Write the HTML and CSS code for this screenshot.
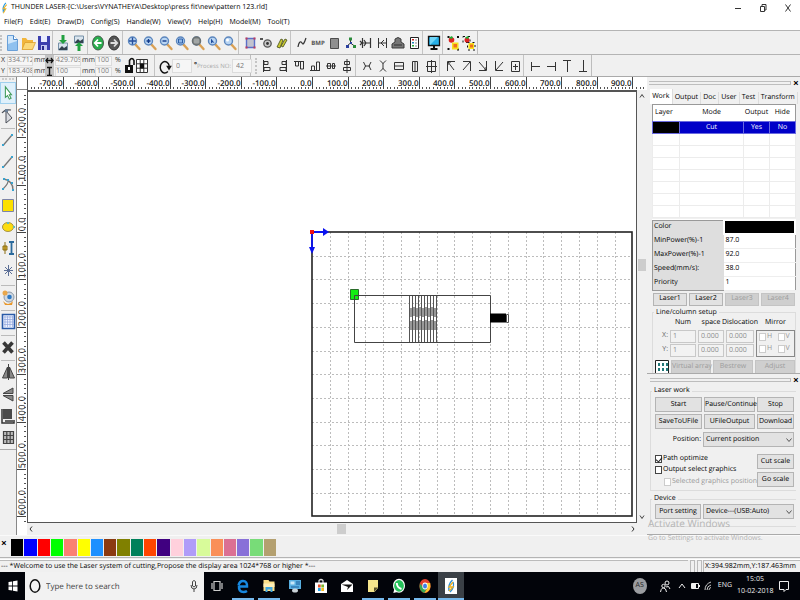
FILE: index.html
```html
<!DOCTYPE html>
<html lang="en">
<head>
<meta charset="utf-8">
<title>THUNDER LASER</title>
<link rel="stylesheet" href="styles.css">
</head>
<body>
<svg class="defs" aria-hidden="true">
  <symbol id="lens" viewBox="0 0 16 16"><path d="M9.5 9.5l4 4.5" stroke="#d9a054" stroke-width="2.4" stroke-linecap="round"/><circle cx="6.5" cy="6" r="4" fill="#b9d5f3" stroke="#5c86bd" stroke-width="1.4"/></symbol>
  <symbol id="chev" viewBox="0 0 8 8"><path d="M1.5 2.5L4 5.5l2.500-3" fill="none" stroke="#555"/></symbol>
</svg>

<header class="title">
  <svg class="logo" viewBox="0 0 10 14"><path d="M6 1Q2 5 3 11l2-3" fill="none" stroke="#2c9be0" stroke-width="1.400"/><path d="M7 3L3 8h3l-3 5" fill="none" stroke="#f0b428" stroke-width="1.200"/></svg>
  <h1>THUNDER LASER-[C:\Users\VYNATHEYA\Desktop\press fit\new\pattern 123.rld]</h1>
  <div class="winbtns">
    <button aria-label="Minimize"><svg viewBox="0 0 8 8"><path d="M1 4.500h6" stroke="#333"/></svg></button>
    <button aria-label="Restore"><svg viewBox="0 0 8 8"><path d="M1.500 2.500h4v5h-4zM3 2V.5h4V6H6" fill="none" stroke="#333"/></svg></button>
    <button aria-label="Close"><svg viewBox="0 0 8 8"><path d="M1.500 .5l5 7M6.500 .5l-5 7" stroke="#333"/></svg></button>
  </div>
</header>
<nav class="menu">
  <button>File(F)</button><button>Edit(E)</button><button>Draw(D)</button><button>Config(S)</button><button>Handle(W)</button><button>View(V)</button><button>Help(H)</button><button>Model(M)</button><button>Tool(T)</button>
</nav>

<div class="bar bar1"><div class="tools" role="toolbar" aria-label="Standard">
  <i class="grip"></i>
  <button aria-label="New"><svg viewBox="0 0 16 16"><path d="M3.500 .5h6l4 4v11h-10z" fill="#cfe6fa" stroke="#6aa0d8"/><path d="M9.500 .5v4h4" fill="#fff" stroke="#4a86c8"/><path d="M4 15V9l9-3v9z" fill="#8fc1ef"/></svg></button>
  <button aria-label="Open"><svg viewBox="0 0 16 16"><path d="M2 14.500V3h4l1.500 2H13v9.500z" fill="#f2b63c"/><path d="M2 14.500L5 7.500h10.500l-3 7z" fill="#fbd878" stroke="#d99a22" stroke-width=".7"/></svg></button>
  <button aria-label="Save"><svg viewBox="0 0 16 16"><path d="M2 1h12v14H2z" fill="#3b3fae"/><path d="M5 1h6v6H5z" fill="#e8ecff"/><path d="M5 10h6v5H5z" fill="#c3c8f2"/><path d="M6 11h2v4H6z" fill="#26298a"/></svg></button>
  <i class="sep"></i>
  <button aria-label="Import"><svg viewBox="0 0 16 16"><path d="M3.500 8h9v7h-9z" fill="#d9e4ee" stroke="#7791a8"/><path d="M4 14l3-3 2 2 3-2v4H4z" fill="#33424f"/><path d="M6.500 0h3v5H12L8 9 4 5h2.500z" fill="#22a040"/></svg></button>
  <button aria-label="Export"><svg viewBox="0 0 16 16"><path d="M3.500 1h9v7h-9z" fill="#d9e4ee" stroke="#7791a8"/><path d="M4 7l3-3 2 2 3-2v4H4z" fill="#33424f"/><path d="M6.500 16h3v-5H12L8 7l-4 4h2.500z" fill="#22a040"/></svg></button>
  <i class="sep"></i>
  <button aria-label="Undo"><svg viewBox="0 0 16 16"><ellipse cx="8" cy="8" rx="5.500" ry="7" fill="#27ad4c" stroke="#4c5b50"/><path d="M11.500 8H5M8 4.500L4.800 8 8 11.500" fill="none" stroke="#fff" stroke-width="1.800"/></svg></button>
  <button aria-label="Redo"><svg viewBox="0 0 16 16"><ellipse cx="8" cy="8" rx="5.500" ry="7" fill="#555" stroke="#333"/><path d="M4.500 8H11M8 4.500L11.200 8 8 11.500" fill="none" stroke="#ddd" stroke-width="1.800"/></svg></button>
  <i class="sep wide"></i>
  <button aria-label="Pan"><svg viewBox="0 0 16 16"><use href="#lens"/><path d="M3 6h7M6.500 2.500v7" stroke="#234c9c" stroke-width="1.400"/></svg></button>
  <button aria-label="Zoom in"><svg viewBox="0 0 16 16"><use href="#lens"/><path d="M4.500 6h4M6.500 4v4" stroke="#123a8a" stroke-width="1.400"/></svg></button>
  <button aria-label="Zoom out"><svg viewBox="0 0 16 16"><use href="#lens"/><path d="M4.500 6h4" stroke="#123a8a" stroke-width="1.400"/></svg></button>
  <button aria-label="Zoom page"><svg viewBox="0 0 16 16"><use href="#lens"/><path d="M4.500 4h4v4h-4z" fill="#8fb6e6" stroke="#2c5fa8"/></svg></button>
  <button aria-label="Zoom data"><svg viewBox="0 0 16 16"><use href="#lens"/><circle cx="6.500" cy="6" r="4" fill="#8b9090" stroke="#6b7070" stroke-width="1.400"/><path d="M4 5h5M4 7h5" stroke="#b8bcbc"/></svg></button>
  <button aria-label="Zoom selection"><svg viewBox="0 0 16 16"><use href="#lens"/><path d="M5 3.500v5l1.500-1.200L8.500 8z" fill="#1c4a9c"/></svg></button>
  <button aria-label="Zoom area"><svg viewBox="0 0 16 16"><use href="#lens"/><circle cx="5.500" cy="5" r="1.500" fill="#fff"/></svg></button>
  <i class="sep wide"></i>
  <button aria-label="Select frame"><svg viewBox="0 0 16 16"><path d="M4.500 3.500h8v9h-8z" fill="#c3c3cf" stroke="#5b6fc8" stroke-width="1.400"/><path d="M3.500 2.500h2v2h-2zM11.500 2.500h2v2h-2zM3.500 11.500h2v2h-2zM11.500 11.500h2v2h-2z" fill="#c23a5a"/></svg></button>
  <button aria-label="Position"><svg viewBox="0 0 16 16"><path d="M2 4h3" stroke="#222" stroke-width="1.500"/><circle cx="9.500" cy="8.500" r="3.700" fill="#c9c9c9" stroke="#555" stroke-width="1.300"/><circle cx="9.500" cy="8.500" r="1.400" fill="#333"/></svg></button>
  <button aria-label="Pencil"><svg viewBox="0 0 16 16"><path d="M3 12l4-8 2 1-3 8zM7 11l4-7 2 1-4 7z" fill="#c8c832" stroke="#454c1c" stroke-width=".8"/></svg></button>
  <i class="sep wide"></i>
  <button aria-label="Smooth curve"><svg viewBox="0 0 16 16"><path d="M4 12c1-6 3-6 4-4s2 1 4-5" fill="none" stroke="#333" stroke-width="1.200"/></svg></button>
  <button class="bmp" aria-label="Bitmap">BMP</button>
  <button aria-label="Fill"><svg viewBox="0 0 16 16"><path d="M4.500 3.500h8v10h-8z" fill="#8f8f8f" stroke="#4c4c4c"/></svg></button>
  <button aria-label="Group"><svg viewBox="0 0 16 16"><path d="M8.500 5v3L5 11M8.500 8l4 3" stroke="#333" fill="none"/><path d="M7 2.500h3v3H7z" fill="#2a8a3a"/><path d="M4 10h3v3H4zM8 7h2v2H8z" fill="#2a3f9e"/><path d="M11 10h3v3h-3z" fill="#2a8a3a"/></svg></button>
  <button aria-label="Offset in"><svg viewBox="0 0 16 16"><path d="M4.500 3v10M12.500 3v10M2 6l2 2-2 2M6 5l2 3-2 3M12 8H5" fill="none" stroke="#333" stroke-width="1.200"/></svg></button>
  <button aria-label="Offset out"><svg viewBox="0 0 16 16"><path d="M4.500 3v10M12.500 3v10M5 8h7M10 5L7 8l3 3" fill="none" stroke="#333"/></svg></button>
  <button aria-label="Output"><svg viewBox="0 0 16 16"><path d="M5 7V4q3-3 6 0v3l3 2v4H2V9z" fill="#777" stroke="#3c3c3c"/><path d="M4 10h8" stroke="#333"/></svg></button>
  <button aria-label="List"><svg viewBox="0 0 16 16"><path d="M4.500 2.500h8v11h-8z" fill="#fff" stroke="#222"/><path d="M6 4h2v1.500H6z" fill="#c22"/><path d="M6 7h2v1.500H6z" fill="#28b"/><path d="M6 10h2v1.500H6z" fill="#2a3"/><path d="M9 5h2M9 8h2M9 11h2" stroke="#888"/></svg></button>
  <i class="sep wide"></i>
  <button aria-label="Preview"><svg viewBox="0 0 16 16"><path d="M2.500 1.500h11v9h-11z" fill="#27b0e8" stroke="#111" stroke-width="1.300"/><path d="M4 10l8-8H4z" fill="#6fd4f6"/><path d="M7 11h2v2h2.500v2h-7v-2H7z" fill="#111"/></svg></button>
  <i class="sep"></i>
  <button aria-label="Group objects"><svg viewBox="0 0 16 16"><path d="M2.500 1h2v2h-2zM12 1h2v2h-2zM2.500 13h2v2h-2zM12 13.500h2v2h-2z" fill="#111"/><circle cx="6.500" cy="5" r="2.800" fill="#d22"/><path d="M4 2.500l3-1.500 1 2-2 1z" fill="#2a3"/><path d="M7 7.500h6.500v7H7z" fill="#f7e01c"/><path d="M8.500 9h3.500v3.500H8.500z" fill="#f0701c"/></svg></button>
  <button aria-label="Ungroup objects"><svg viewBox="0 0 16 16"><path d="M2 1.500h7v6H2zM6.500 7.500h7.500v7.500H6.500z" fill="none" stroke="#111" stroke-dasharray="2 3"/><circle cx="6" cy="5" r="2.500" fill="#d22"/><path d="M4 2.500l3-1.500 1 2-2 1z" fill="#2a3"/><path d="M7.500 8h5.500v6H7.500z" fill="#f7e01c"/><path d="M9 9.500h3v3H9z" fill="#f0701c"/></svg></button>
</div></div>

<div class="bar bar2">
  <form class="tools props">
    <div class="xy">
      <label for="px">X</label><input id="px" value="334.712"><span>mm</span>
      <label for="py">Y</label><input id="py" value="183.408"><span>mm</span>
    </div>
    <div class="wh">
      <svg viewBox="0 0 9 11"><path d="M1 5.500h7M3 3L1 5.500 3 8M6 3l2 2.500L6 8" fill="none" stroke="#111" stroke-width="1.300"/></svg><input aria-label="Width" value="429.705"><span>mm</span>
      <svg viewBox="0 0 9 11"><path d="M4.500 2v7M2 1.500h5M2 9.500h5" fill="none" stroke="#111" stroke-width="1.400"/></svg><input aria-label="Height" value="100"><span>mm</span>
    </div>
    <div class="pct">
      <input aria-label="Width percent" value="100"><span>%</span>
      <input aria-label="Height percent" value="100"><span>%</span>
    </div>
    <button type="button" class="lock" aria-label="Lock ratio"><svg viewBox="0 0 12 20"><path d="M5.500 9V4.500q2.500-4 4.500 0V9" fill="none" stroke="#111" stroke-width="1.600"/><path d="M1 9h8v8H1z" fill="#111"/><path d="M4 11h2v3H4z" fill="#fff"/></svg></button>
    <button type="button" class="lock" aria-label="Anchor"><svg viewBox="0 0 12 20"><path d="M.5 3.500h11v13H.5zM4.200 3v13M7.800 3v13M0 7.800h12M0 12.200h12" fill="#fff" stroke="#333"/><path d="M4 7.500h4v5H4z" fill="#111"/></svg></button>
    <i class="sep"></i>
    <button type="button" class="rot" aria-label="Rotate"><svg viewBox="0 0 12 14"><path d="M8.500 11A4 5 0 1 1 9.700 6" fill="none" stroke="#111" stroke-width="1.300"/><path d="M7 6h5l-2.500 4z" fill="#111"/></svg></button>
    <input class="one" aria-label="Angle" value="0"><b class="deg">°</b>
    <label for="pno" class="dim">Process NO:</label><input class="one no" id="pno" value="42">
  </form>
  <div class="tools line" role="toolbar" aria-label="Align">
    <i class="grip"></i>
    <button aria-label="Align left"><svg viewBox="0 0 16 16"><path d="M4.500 2v12M5 3.500h4v3H5zM5 9.500h6v3H5z"/></svg></button>
    <button aria-label="Align right"><svg viewBox="0 0 16 16"><path d="M11.500 2v12M7 3.500h4v3H7zM5 9.500h6v3H5z"/></svg></button>
    <button aria-label="Align top"><svg viewBox="0 0 16 16"><path d="M3 3.500h10M4.500 4v4h3V4M9.500 4v7h3V4"/></svg></button>
    <button aria-label="Align bottom"><svg viewBox="0 0 16 16"><path d="M3 12.500h10M4.500 12V8h3v4M9.500 12V4h3v8"/></svg></button>
    <button aria-label="Align middle"><svg viewBox="0 0 16 16"><path d="M3 8h10M4.500 5.500h3v5h-3zM9.500 5.500h2v5h-2z"/></svg></button>
    <button aria-label="Align center"><svg viewBox="0 0 16 16"><path d="M8 1v14M5.500 3.500h5v3h-5zM4.500 9.500h7v3h-7z"/></svg></button>
    <i class="sep wide"></i>
    <button aria-label="Equal horizontal gap"><svg viewBox="0 0 16 16"><path d="M4.500 4l2 4-2 4M12 4l-2 4 2 4M6 8h5"/></svg></button>
    <button aria-label="Equal vertical gap"><svg viewBox="0 0 16 16"><path d="M5 2.500l3 3 3-3M5 13.500l3-3 3 3M8 5v6"/></svg></button>
    <button aria-label="Same width"><svg viewBox="0 0 16 16"><path d="M3.500 4.500h9v7h-9zM3.500 8h9"/></svg></button>
    <button aria-label="Same height"><svg viewBox="0 0 16 16"><path d="M5.500 3.500h5v10h-5zM8 4v9"/></svg></button>
    <button aria-label="Same size"><svg viewBox="0 0 16 16"><path d="M4.500 3.500h8v10h-8zM8.500 2v13M3 8.500h11"/></svg></button>
    <i class="sep wide"></i>
    <button aria-label="To top left"><svg viewBox="0 0 16 16"><path d="M4.500 13V3.500H12M5 4l6 8M5 7V4h3"/></svg></button>
    <button aria-label="To top right"><svg viewBox="0 0 16 16"><path d="M4 3.500h7.500V13M11 4l-7 8"/></svg></button>
    <button aria-label="To bottom right"><svg viewBox="0 0 16 16"><path d="M11.500 3v9.500H4M11 12L4 4M9 12h2V9"/></svg></button>
    <button aria-label="To bottom left"><svg viewBox="0 0 16 16"><path d="M4.500 3v9.500H12M5 12l7-8"/></svg></button>
    <button aria-label="To center"><svg viewBox="0 0 16 16"><path d="M4.500 3.500h8v10h-8zM8.500 6v6M6 8.500h5"/></svg></button>
    <i class="sep wide"></i>
    <button aria-label="To left edge"><svg viewBox="0 0 16 16"><path d="M4.500 4v9M5 8.500h8"/></svg></button>
    <button aria-label="To right edge"><svg viewBox="0 0 16 16"><path d="M12.500 4v9M4 8.500h8"/></svg></button>
    <button aria-label="To top edge"><svg viewBox="0 0 16 16"><path d="M4 2.500h8M8.500 3v11"/></svg></button>
    <button aria-label="To bottom edge"><svg viewBox="0 0 16 16"><path d="M4 13.500h8M8.500 2v11"/></svg></button>
  </div>
</div>

<main class="work">
  <div class="side" role="toolbar" aria-label="Draw">
    <i class="hgrip"></i>
    <button class="on" aria-label="Select"><svg viewBox="0 0 16 20"><path d="M5 3v12l2.500-2 2 4 2-1-2-4H12z" fill="#fff" stroke="#3f9a58" stroke-width="1.200"/></svg></button>
    <button class="tall" aria-label="Edit node"><svg viewBox="0 0 16 20"><path d="M6 5v12l6-5z" fill="#d9dbe0" stroke="#4a4f58"/><path d="M2 7q3-4 9-3" fill="none" stroke="#4a4f58" stroke-width="1.200"/><path d="M5 3h3v3H5z" fill="#6b7f96"/></svg></button>
    <i class="hsep"></i>
    <button aria-label="Line"><svg viewBox="0 0 16 20"><path d="M3.500 15L12 5" stroke="#777" stroke-width="1.300"/><path d="M2 14h2v2H2zM11 4h2v2h-2z" fill="#39a3cf"/></svg></button>
    <button aria-label="Polyline"><svg viewBox="0 0 16 20"><path d="M3.500 15L12 5" stroke="#777" stroke-width="1.300"/><path d="M2 14h2v2H2zM11 4h2v2h-2z" fill="#39a3cf"/></svg></button>
    <button aria-label="Curve"><svg viewBox="0 0 16 20"><path d="M3 15Q9 9 8 6M4 5q9 2 9 11" fill="none" stroke="#777" stroke-width="1.300"/><path d="M3 4h2v2H3zM7 5h2v2H7zM11 8h2v2h-2zM2 14h2v2H2zM12 15h2v2h-2z" fill="#39a3cf"/></svg></button>
    <button aria-label="Rectangle"><svg viewBox="0 0 16 20"><path d="M2.500 3.500h11v12h-11z" fill="#fce000" stroke="#7d84a8"/></svg></button>
    <button aria-label="Ellipse"><svg viewBox="0 0 16 20"><ellipse cx="8" cy="9" rx="5.500" ry="4.500" fill="#fcdc10" stroke="#a89448"/><path d="M7 4h2v2H7zM13 8h2v2h-2z" fill="#6bb"/></svg></button>
    <button aria-label="Text"><svg viewBox="0 0 16 20"><path d="M9 2h5M9 14h5M11.500 2v12" stroke="#2b6a9c" stroke-width="1.800"/><path d="M5 2v12M3 6h4v4H3z" stroke="#8a6c10" fill="#e2b93c"/></svg></button>
    <button class="tall" aria-label="Point"><svg viewBox="0 0 16 20"><path d="M8.500 2v11M4 7.500h9M5 4l7 7M12 4l-7 7" stroke="#5c6f96"/></svg></button>
    <i class="hsep"></i>
    <button class="tall" aria-label="Camera"><svg viewBox="0 0 16 20"><path d="M3 13q5 6 10 0l-1 4H5z" fill="#e8972a"/><circle cx="9" cy="9" r="5" fill="#cfd8e2" stroke="#8d99a6"/><circle cx="9.500" cy="9" r="2.300" fill="#2b78c4"/><circle cx="5" cy="5" r="2.500" fill="#e9a74a"/></svg></button>
    <i class="hsep"></i>
    <button class="tall" aria-label="Array"><svg viewBox="0 0 16 20"><path d="M2.500 1.500h12v14h-12z" fill="#eef3ff" stroke="#2a5ba8" stroke-width="1.600"/><path d="M5 3v11M7.500 3v11M10 3v11M12.500 3v11M4 4h10M4 6.500h10M4 9h10M4 11.500h10" stroke="#91a6dc" stroke-width=".7"/></svg></button>
    <i class="hsep"></i>
    <button class="tall" aria-label="Delete"><svg viewBox="0 0 16 20"><path d="M3.500 4.500l9 10M12.500 4.500l-9 10" stroke="#383838" stroke-width="3.600"/></svg></button>
    <i class="hsep"></i>
    <button aria-label="Mirror horizontally"><svg viewBox="0 0 16 20"><path d="M7.500 5v11h-5zM9.500 5v11h5z" fill="#888" stroke="#444"/><path d="M8.500 2v16" stroke="#444"/></svg></button>
    <button aria-label="Mirror vertically"><svg viewBox="0 0 16 20"><path d="M13 9.500H3L13 4zM13 11.500H3L13 17z" fill="#888" stroke="#444"/></svg></button>
    <button aria-label="Place corner"><svg viewBox="0 0 16 20"><path d="M3 3h9v10H3z" fill="#4a4a4a"/><path d="M2 3v14h12v-3M5 15h8" fill="none" stroke="#333" stroke-width="1.500"/></svg></button>
    <button aria-label="Grid array"><svg viewBox="0 0 16 20"><path d="M3.500 3.500h10v12h-10zM6.800 3v13M10.200 3v13M3 7.500h11M3 11.500h11" fill="#bbb" stroke="#444" stroke-width="1.200"/></svg></button>
    <i class="hend"></i>
  </div>
  <div class="corner"></div>
  <svg class="ruler-x" id="rulerX"></svg>
  <svg class="ruler-y" id="rulerY"></svg>
  <div class="canvas">
    <svg id="sheet">
      <g id="grid" stroke="#bcbcbc" stroke-dasharray="2 2" fill="none"></g>
      <rect x="284" y="140" width="320" height="284" fill="none" stroke="#222" stroke-width="1.600"/>
      <path d="M284 140h14M284 140v18" stroke="#0a12f0" stroke-width="1.800"/>
      <path d="M295 136l6 4-6 4zM281 155h6l-3 7z" fill="#0a12f0"/>
      <path d="M282 138h4v4h-4z" fill="#f01010"/>
      <path d="M322.500 197.500h8v10h-8z" fill="#12ee12" stroke="#2b6b2b"/>
      <path d="M326.500 203.500h136v47h-136z" fill="none" stroke="#444"/>
      <g id="comb" stroke="#555" fill="none"></g>
      <path d="M462 221.500h16v9h-16z" fill="#000"/>
      <path d="M478.500 222.500h2v8h-2z" fill="#fff" stroke="#555"/>
    </svg>
  </div>
  <div class="vscroll"><i></i><svg viewBox="0 0 8 8"><path d="M2 5.500L4 2.500l2 3" fill="none" stroke="#444"/></svg><svg viewBox="0 0 8 8"><path d="M2 2.500l2 3 2-3" fill="none" stroke="#444"/></svg></div>
  <div class="hscroll"><i></i><svg viewBox="0 0 8 8"><path d="M5 1.500L3 4l2 2.500" fill="none" stroke="#333"/></svg><svg viewBox="0 0 8 8"><path d="M3 1.500L5 4 3 6.500" fill="none" stroke="#333"/></svg></div>

  <aside class="dock">
    <section class="upper">
      <div class="dockbar"><i></i><button aria-label="Close panel">×</button></div>
      <div class="tabs" role="tablist"><button role="tab" aria-selected="true">Work</button><button role="tab">Output</button><button role="tab">Doc</button><button role="tab">User</button><button role="tab">Test</button><button role="tab">Transform</button></div>
      <table class="layers">
        <colgroup><col class="c1"><col><col class="c3"><col class="c4"></colgroup>
        <thead><tr><th>Layer</th><th>Mode</th><th>Output</th><th>Hide</th></tr></thead>
        <tbody><tr class="sel"><td></td><td>Cut</td><td>Yes</td><td>No</td></tr>
        <tr><td></td><td></td><td></td><td></td></tr><tr><td></td><td></td><td></td><td></td></tr><tr><td></td><td></td><td></td><td></td></tr><tr><td></td><td></td><td></td><td></td></tr><tr><td></td><td></td><td></td><td></td></tr><tr><td></td><td></td><td></td><td></td></tr><tr><td></td><td></td><td></td><td></td></tr></tbody>
      </table>
      <table class="params">
        <tr><th>Color</th><td class="black"></td></tr>
        <tr><th>MinPower(%)-1</th><td>87.0</td></tr>
        <tr><th>MaxPower(%)-1</th><td>92.0</td></tr>
        <tr><th>Speed(mm/s):</th><td>38.0</td></tr>
        <tr><th>Priority</th><td>1</td></tr>
      </table>
      <div class="lasers"><button>Laser1</button><button>Laser2</button><button disabled>Laser3</button><button disabled>Laser4</button></div>
      <fieldset class="setup"><legend>Line/column setup</legend>
        <div class="matrix">
          <span></span><span>Num</span><span>space</span><span>Dislocation</span><span>Mirror</span>
          <label for="nx">X:</label><input id="nx" value="1" disabled><input aria-label="X space" value="0.000" disabled><input aria-label="X dislocation" value="0.000" disabled>
          <div class="mirror"><label><input type="checkbox" disabled>H</label><label><input type="checkbox" disabled>V</label><label><input type="checkbox" disabled>H</label><label><input type="checkbox" disabled>V</label></div>
          <label for="ny">Y:</label><input id="ny" value="1" disabled><input aria-label="Y space" value="0.000" disabled><input aria-label="Y dislocation" value="0.000" disabled>
        </div>
        <div class="arrays"><button class="arr" aria-label="Array preview"><svg viewBox="0 0 14 14"><path d="M.5 .5h13v13H.5z" fill="#fff" stroke="#222"/><path d="M3 3h2v3H3zM7 3h2v3H7zM11 3h2v3h-2zM3 8h2v3H3zM7 8h2v3H7zM11 8h2v3h-2z" fill="#277"/></svg></button><button disabled>Virtual array</button><button disabled>Bestrew</button><button disabled>Adjust</button></div>
      </fieldset>
    </section>
    <section class="lower">
      <div class="dockbar"><i></i><button aria-label="Close panel">×</button></div>
      <fieldset class="laser"><legend>Laser work</legend>
        <div class="g3"><button>Start</button><button>Pause/Continue</button><button>Stop</button><button>SaveToUFile</button><button>UFileOutput</button><button>Download</button></div>
        <div class="pos"><label for="pos">Position:</label><span class="combo"><select id="pos"><option>Current position</option></select><svg><use href="#chev"/></svg></span></div>
        <div class="opts">
          <div class="checks">
            <label><input type="checkbox" checked>Path optimize</label>
            <label><input type="checkbox">Output select graphics</label>
            <label class="sub"><input type="checkbox" disabled>Selected graphics position</label>
          </div>
          <div class="scales"><button>Cut scale</button><button>Go scale</button></div>
        </div>
      </fieldset>
      <fieldset class="device"><legend>Device</legend>
        <div class="dev"><button>Port setting</button><span class="combo"><select aria-label="Device"><option>Device---(USB:Auto)</option></select><svg><use href="#chev"/></svg></span></div>
      </fieldset>
    </section>
  </aside>
</main>

<div class="palette"><button class="px" aria-label="Close palette">×</button><div class="swatches" id="swatches"></div></div>
<div class="status"><span class="msg">--- *Welcome to use the Laser system of cutting,Propose the display area 1024*768 or higher *---</span><i></i><i></i><span class="coords">X:394.982mm,Y:187.463mm</span></div>

<div class="activate"><strong>Activate Windows</strong><span>Go to Settings to activate Windows.</span></div>

<footer class="taskbar">
  <button class="start" aria-label="Start"><svg viewBox="0 0 10 12"><path d="M.5 2l3.700-.6v4.200H.5zM5 1.300L9.500 .6v5H5zM.5 6.400h3.700v4.200L.5 10zM5 6.400h4.500v5L5 10.700z" fill="#fff"/></svg></button>
  <div class="search">
    <svg class="ring" viewBox="0 0 12 16"><ellipse cx="6" cy="8" rx="4.800" ry="6.200" fill="none" stroke="#111" stroke-width="1.500"/></svg>
    <input aria-label="Search" placeholder="Type here to search">
    <svg class="mic" viewBox="0 0 8 14"><path d="M2.500 2.500q1.500-2 3 0V7q-1.500 2-3 0zM1 6q0 4 3 4t3-4M4 10v3" fill="none" stroke="#444"/></svg>
  </div>
  <div class="apps">
    <button aria-label="Task view"><svg viewBox="0 0 16 16"><path d="M5 3.500h6v9H5zM3 5v6M13 5v6" fill="none" stroke="#ccc" stroke-width="1.200"/></svg></button>
    <button class="run" aria-label="Edge"><svg viewBox="0 0 16 16"><path d="M3.500 8.500H12q.3-5.500-4-5.500-3.500 0-4.500 4.500M4 8q-.5 6 4.500 6 2 0 3.500-1" fill="none" stroke="#1788e0" stroke-width="2.500"/></svg></button>
    <button class="run" aria-label="File Explorer"><svg viewBox="0 0 16 16"><path d="M2.500 2h5l1 1.500h5V13h-11z" fill="#fbe08a"/><path d="M2.500 5.500h11V9h-11z" fill="#fff0b8"/><path d="M4.500 9h7v5h-2v-2.500h-3V14h-2z" fill="#3fa7e0"/></svg></button>
    <button aria-label="Control panel"><svg viewBox="0 0 16 16"><path d="M2 2h12v9H2z" fill="#58aee0"/><path d="M3.500 3.500h4v3h-4z" fill="#c7e6f7"/><path d="M9 4h4M9 6h4M4 9h8" stroke="#1d5f9c"/><ellipse cx="8" cy="12.500" rx="3" ry="2" fill="#c9d2d8"/></svg></button>
    <button aria-label="Store"><svg viewBox="0 0 16 16"><path d="M6 5V2.500q2-2 4 0V5" fill="none" stroke="#ddd" stroke-width="1.200"/><path d="M2 4.500h12V15H2z" fill="#fff"/><path d="M5 6.500h2.700v3H5z" fill="#e5502a"/><path d="M8.300 6.500H11v3H8.300z" fill="#7cb82a"/><path d="M5 10h2.700v3H5z" fill="#1fa0e8"/><path d="M8.300 10H11v3H8.300z" fill="#f7b81c"/></svg></button>
    <button aria-label="Mail"><svg viewBox="0 0 16 16"><path d="M2 6l6-4 6 4v8H2z" fill="#fff"/><path d="M2.500 6.500h11L8 12l1-3z" fill="#111"/></svg></button>
    <button class="run" aria-label="Sticky notes"><svg viewBox="0 0 16 16"><path d="M3 2h10v8l-3.500 4H3z" fill="#f5e58c"/><path d="M9 14V9.500h4z" fill="#57502a"/></svg></button>
    <button class="run" aria-label="WhatsApp"><svg viewBox="0 0 16 16"><ellipse cx="8" cy="7.800" rx="6" ry="7" fill="#fff"/><path d="M2.300 15l1-4 3 3z" fill="#fff"/><ellipse cx="8" cy="7.800" rx="4.900" ry="5.900" fill="#25c15a"/><path d="M5.800 5q0 4.500 4.700 6" fill="none" stroke="#fff" stroke-width="1.900"/></svg></button>
    <button class="run" aria-label="Chrome"><svg viewBox="0 0 16 16"><ellipse cx="8" cy="8" rx="5.600" ry="7" fill="#e2412e"/><path d="M2.800 5.500Q1.500 13 7.500 15l2.500-5-4-1z" fill="#38a852"/><path d="M8 5h5.200q1.500 8-5.700 10l3-5z" fill="#fccb2e"/><ellipse cx="8" cy="8" rx="2.700" ry="3.400" fill="#fff"/><ellipse cx="8" cy="8" rx="2" ry="2.600" fill="#3f7fe8"/></svg></button>
    <button class="run cur" aria-label="Thunder Laser"><svg viewBox="0 0 16 16"><path d="M2 0h12v16H2z" fill="#fff"/><path d="M9.500 2Q5 6 6 13M10 4q2 5-3 10" fill="none" stroke="#2c8fd8" stroke-width="1.400"/><path d="M10 4L6 9h4l-4 4" fill="none" stroke="#f0b020" stroke-width="1.300"/></svg></button>
  </div>
  <div class="tray">
    <span class="as">AS</span>
    <svg class="ppl" viewBox="0 0 12 14"><circle cx="8" cy="4" r="2" fill="none" stroke="#eee"/><circle cx="4.500" cy="7" r="1.700" fill="none" stroke="#eee"/><path d="M1.500 13q1-6 5-3l1 3M7 8q3-2 4 2" fill="none" stroke="#eee"/></svg>
    <svg class="t" viewBox="0 0 10 12"><path d="M2 8l3-4 3 4" fill="none" stroke="#eee"/></svg>
    <svg class="t" viewBox="0 0 10 12"><path d="M1.500 3.500h7v5h-7z" fill="none" stroke="#eee"/><path d="M2 4h4v4H2zM9 5h1v2H9z" fill="#eee"/></svg>
    <svg class="t" viewBox="0 0 10 12"><path d="M2 10Q2 4 8 2M4 10q0-4 4-5M6 10q0-2 2-2.500" fill="none" stroke="#ccc"/></svg>
    <span class="lang">ENG</span>
    <span class="clock">15:05<br>10-02-2018</span>
    <svg class="note" viewBox="0 0 12 14"><path d="M1.500 2.500h9v8H8l-2 2v-2H1.500z" fill="none" stroke="#eee"/></svg>
  </div>
</footer>
<script src="app.js"></script>
</body>
</html>
```

FILE: styles.css
```css
* { box-sizing: border-box; }
:root {
  --ui: "Open Sans", "Noto Sans", sans-serif;
  --face: #f0f0f0;
  --edge: #bdbdbd;
}
body {
  margin: 0;
  height: 100vh;
  display: grid;
  grid-template-rows: 15px 15px 24px 23px minmax(0, 1fr) 23px 14px 28px;
  grid-template-columns: minmax(0, 1fr);
  font: 7px/10px var(--ui);
  text-rendering: geometricPrecision;
  color: #000;
  background: var(--face);
  overflow: hidden;
}
button, input, select { font: inherit; text-rendering: inherit; color: inherit; margin: 0; padding: 0; border: 0; background: none; border-radius: 0; }
svg { display: block; }
.defs { position: absolute; width: 0; height: 0; }

.title { display: flex; align-items: center; background: #fff; padding: 1px 4px 0 0; }
.logo { width: 10px; height: 12px; }
h1 { flex: 1; margin: 0; font-size: 7px; font-weight: 400; white-space: nowrap; padding-left: 1px; }
.winbtns { display: flex; gap: 17px; padding-right: 4px; }
.winbtns svg { width: 8px; height: 8px; }
.menu { display: flex; gap: 7px; align-items: center; background: #fff; padding: 0 4px; }

.bar { display: flex; border-top: 1px solid #b4b4b4; }
.tools { display: flex; align-items: center; border-right: 1px solid var(--edge); }
.tools > button { width: 16px; height: 16px; }
.tools > button > svg { width: 16px; height: 16px; }
.grip { width: 4px; height: 16px; border-left: 2px dotted #c4c4c4; flex: none; }
.line .grip { margin-left: 4px; }
.sep { width: 3px; height: 100%; border-left: 1px solid #c4c4c4; flex: none; }
.sep.wide { width: 4px; }
.tools > .bmp { font-size: 6px; font-weight: 700; color: #555; }
.line svg { fill: none; stroke: #333; }

.props { width: 251px; padding-left: 1px; color: #333; }
.xy, .wh, .pct { display: grid; grid-auto-rows: 11px; align-items: center; }
.xy { grid-template-columns: 6px 26px 12px; }
.wh { grid-template-columns: 10px 26px 14px; }
.wh svg { width: 9px; height: 11px; background: #c4c4c4; }
.pct { grid-template-columns: 17px 12px; }
.props span { padding-left: 1px; }
.pct span { padding-left: 3px; }
.props input { width: 100%; height: 10px; border: 1px solid #dcdcdc; background: #f6f6f6; color: #7c7c7c; }
.xy input, .wh input, .pct input { min-width: 0; }
.pct input { padding-left: 1px; }
.props > .lock { width: 12px; height: 20px; }
.props > .lock svg { width: 12px; height: 20px; }
.props .sep { margin-left: 6px; }
.props > .rot { width: 12px; height: 14px; }
.rot svg { width: 12px; height: 14px; }
.props .one { width: 20px; height: 14px; margin-left: 3px; padding-left: 3px; }
.deg { width: 5px; padding-left: 2px; }
.dim { color: #a8a8a8; flex: 1; white-space: nowrap; text-align: right; font-size: 6px; }
.props .no { margin: 0 3px 0 1px; }

.work {
  display: grid;
  grid-template-columns: 17px 10px minmax(0, 1fr) 10px 153px;
  grid-template-rows: 13px minmax(0, 1fr) 12px;
  border-top: 1px solid #aaa;
  margin-top: -1px;
}
.side { grid-row: 1 / 4; border-right: 1px solid #888; display: flex; flex-direction: column; }
.side button { width: 16px; height: 22px; }
.side .tall { height: 24px; }
.side svg { width: 16px; height: 20px; }
.side .on { background: #dff0fb; border: 1px solid #9fd0ee; }
.side .on svg { width: 14px; height: 18px; }
.hgrip { height: 3px; margin: 1px 2px; border-top: 2px dotted #ccc; }
.hsep { height: 1px; margin: 0 1px; background: #bbb; }
.hend { height: 1px; background: #aaa; }
.corner { border-bottom: 1px solid #888; background: #fff; }
.ruler-x { grid-column: 3 / 5; width: 100%; height: 13px; background: #fff; border-left: 1px solid #555; }
.ruler-y { grid-column: 2; grid-row: 2 / 4; width: 10px; height: 100%; background: #fff; }
.ruler-x text { font: 600 8px var(--ui); fill: #222; }
.ruler-y text { font: 9px "DejaVu Sans", sans-serif; fill: #333; }
.canvas { grid-column: 3; grid-row: 2; border: 1px solid #555; border-top-width: 2px; background: #fff; overflow: hidden; }
.canvas svg { width: 100%; height: 100%; }
.vscroll { grid-column: 4; grid-row: 2; display: flex; flex-direction: column; justify-content: space-between; align-items: center; position: relative; padding: 2px 0; }
.vscroll svg, .hscroll svg { width: 8px; height: 8px; }
.vscroll i { position: absolute; left: 1px; right: 1px; top: 39%; height: 12px; background: #cdcdcd; }
.hscroll { grid-column: 3 / 5; grid-row: 3; display: flex; justify-content: space-between; align-items: center; position: relative; padding: 0 10px 0 0; }
.hscroll i { position: absolute; left: 50%; top: 1px; width: 9px; height: 10px; background: #cdcdcd; }

.dock { grid-column: 5; grid-row: 1 / 4; display: flex; flex-direction: column; background: var(--face); min-height: 0; }
.upper { height: 297px; overflow: hidden; border-bottom: 1px solid #aaa; padding: 0 4px 0 5px; }
.lower { flex: 1; border-bottom: 1px solid #aaa; padding: 0 4px 0 3px; }
.dockbar { display: flex; align-items: center; height: 12px; gap: 2px; margin: 0 -3px; }
.lower .dockbar { margin: 0 -3px 0 0; }
.dockbar i { flex: 1; height: 4px; border: 1px solid #bdbdbd; border-width: 1px 1px 1px 0; }
.dockbar button, .px { width: 6px; font: bold 9px/9px "Liberation Sans", sans-serif; }
.tabs { display: flex; align-items: flex-end; height: 15px; margin-left: -2px; margin-right: -2px; }
.tabs button { height: 12px; flex: 1 1 auto; border-right: 1px solid #dcdcdc; white-space: nowrap; }
.tabs button[aria-selected] { height: 15px; background: #fff; }
table { width: 100%; border-collapse: collapse; table-layout: fixed; background: #fff; border: 1px solid #999; }
th, td { padding: 0; font-weight: 400; text-align: center; }
.layers th { height: 17px; }
.layers th:first-child { text-align: left; padding-left: 2px; }
.layers td { height: 12px; border: 1px solid #ececec; line-height: 9px; }
.layers .sel td { background: #0000c8; color: #fff; border-color: #6a6ae0; }
.layers .sel td:first-child { background: #000; }
.c1 { width: 27px; } .c3 { width: 26px; } .c4 { width: 26px; }
.params { margin-top: 1px; }
.params tr { height: 14px; }
.params th { width: 71px; background: #dedede; text-align: left; padding-left: 1px; }
.params td { text-align: left; padding-left: 2px; border-bottom: 1px solid #eee; }
.params .black { background: #000; border: 2px solid #fff; }
.dock button { white-space: nowrap; }
.lasers button, .arrays button, .g3 button, .scales button, .dev button { background: #e2e2e2; border: 1px solid #b4b4b4; text-align: center; }
.dock button:disabled { color: #9c9c9c; background: #cfcfcf; border-color: #c4c4c4; }
.lasers { display: grid; grid-template-columns: repeat(4, 1fr); gap: 2px; margin: 2px 1px 0; }
.lasers button { height: 13px; }
fieldset { margin: 0; padding: 0; border: 1px solid #dcdcdc; min-width: 0; }
legend { padding: 0 2px; margin-left: 1px; }
.setup { margin-top: 2px; height: 80px; border-bottom: 0; }
.matrix { display: grid; grid-template-columns: 15px 26px 26px 28px 1fr; gap: 1px 2px; grid-template-rows: 11px 13px 13px; align-items: center; text-align: center; white-space: nowrap; }
.matrix > span { display: flex; justify-content: center; }
.matrix > input { width: 100%; height: 13px; border: 1px solid #c8c8c8; background: #f2f2f2; color: #8a8a8a; padding-left: 2px; }
.matrix > label { text-align: right; color: #666; }
.mirror { grid-column: 5; grid-row: 2 / 4; border: 1px solid #888; align-self: stretch; display: grid; grid-template-columns: 1fr 1fr; align-items: center; color: #999; }
.mirror label, .checks label { display: flex; align-items: center; gap: 1px; }
input[type="checkbox"] { appearance: none; width: 7px; height: 8px; background: #fff; border: 1px solid #444; flex: none; position: relative; }
input[type="checkbox"]:disabled { border-color: #ccc; }
input[type="checkbox"]:checked::after { content: ""; position: absolute; left: 1px; top: 0; width: 3px; height: 5px; border: solid #222; border-width: 0 1px 1px 0; transform: rotate(40deg); }
.mirror label { padding-left: 2px; }
.arrays { display: grid; grid-template-columns: 14px 40px 40px 1fr; gap: 2px; margin: 3px 0 0 2px; }
.arrays button { height: 15px; }
.arrays .arr { border: 0; background: none; }
.arr svg { width: 14px; height: 14px; }

.laser { height: 105px; border-right: 0; }
.g3 { display: grid; grid-template-columns: 47px minmax(0, 1fr) 37px; gap: 2px; padding: 1px 2px 0 4px; }
.g3 button { height: 15px; }
.pos { display: flex; align-items: center; justify-content: flex-end; gap: 2px; padding: 3px 2px 0 4px; }
.combo { position: relative; width: 91px; }
.combo select { appearance: none; width: 100%; height: 15px; background: #e2e2e2; border: 1px solid #b4b4b4; padding-left: 2px; display: block; }
.combo svg { position: absolute; right: 1px; top: 4px; width: 8px; height: 8px; pointer-events: none; }
.opts { display: flex; justify-content: space-between; padding: 7px 2px 0 4px; }
.checks { display: grid; gap: 1px; align-content: start; white-space: nowrap; min-width: 0; }
.checks .sub { padding: 1px 0 0 9px; color: #999; }
.scales { display: grid; gap: 3px; width: 37px; flex: none; }
.scales button { height: 15px; }
.device { height: 33px; margin-top: 3px; border-right: 0; }
.dev { display: flex; gap: 2px; justify-content: space-between; padding: 0 2px 0 4px; }
.dev button { flex: 1; height: 15px; }

.palette { display: flex; padding: 3px 0 0 1px; border-top: 1px solid #fafafa; border-bottom: 1px solid #b4b4b4; }
.px { height: 9px; margin-right: 4px; }
.swatches { display: grid; grid-template-columns: repeat(20, 1fr); width: 265px; height: 17px; gap: 1px; }
.status { display: flex; align-items: stretch; border-top: 1px solid #fff; margin-top: 1px; line-height: 11px; white-space: nowrap; }
.msg { flex: 1; padding-left: 1px; border-top: 1px solid #bbb; }
.status i { width: 5px; margin-left: 2px; border: 1px solid #bbb; border-width: 1px 1px 0; }
.coords { width: 97px; border: solid #bbb; border-width: 1px 0 0 1px; margin-left: 1px; padding-left: 1px; }
.activate { position: absolute; right: 30px; bottom: 56px; width: 122px; color: #b4b4b4; display: grid; gap: 3px; white-space: nowrap; pointer-events: none; line-height: 11px; }
.activate strong { font-weight: 400; font-size: 10px; line-height: 14px; }

.taskbar { display: flex; background: #02040a; color: #eee; }
.start { width: 25px; display: grid; place-items: center; }
.start svg { width: 10px; height: 12px; }
.search { width: 179px; background: #f2f2f2; display: flex; align-items: center; padding: 0 6px 0 4px; color: #333; }
.ring { width: 12px; height: 16px; }
.search input { flex: 1; min-width: 0; height: 20px; padding-left: 5px; font-size: 8px; outline: 0; }
.search input::placeholder { color: #444; opacity: 1; }
.mic { width: 8px; height: 14px; }
.apps { display: flex; }
.apps button { width: 26px; display: grid; place-items: center; position: relative; }
.apps svg { width: 16px; height: 16px; }
.apps .run::after { content: ""; position: absolute; left: 2px; right: 2px; bottom: 0; height: 2px; background: #76b9ed; }
.apps .cur { background: #3a4046; }
.apps .cur::after { left: 0; right: 0; }
.tray { margin-left: auto; display: flex; align-items: center; padding-right: 10px; }
.as { width: 14px; height: 16px; border-radius: 50%; background: #9a9ca0; color: #222; text-align: center; line-height: 16px; margin-right: 12px; }
.ppl { width: 12px; height: 14px; margin-right: 6px; }
.t { width: 10px; height: 12px; margin-right: 3px; }
.lang { margin: 0 5px 0 2px; }
.clock { width: 36px; text-align: center; line-height: 12px; white-space: nowrap; }
.note { width: 12px; height: 14px; margin-left: 5px; }
```

FILE: app.js
```js
const NS = "http://www.w3.org/2000/svg";
const add = (parent, tag, attrs, text) => {
  const el = document.createElementNS(NS, tag);
  for (const k in attrs) el.setAttribute(k, attrs[k]);
  if (text) el.textContent = text;
  parent.appendChild(el);
};

// Screen pixels per 100 mm, and the origin inside the canvas.
const SX = 35.6, SY = 47.4, OX = 284, OY = 140;

const rx = document.getElementById("rulerX");
const ry = document.getElementById("rulerY");
let small = "", big = "";
for (let i = -79; i <= 94; i++) {
  const x = Math.round(OX + i * SX / 10) + 0.5;
  if (i % 10) small += `M${x} 10v2`;
  else {
    big += `M${x} 0v12`;
    add(rx, "text", { x: x - 1, y: 9, "text-anchor": "end" }, (i * 10).toFixed(1));
  }
}
add(rx, "path", { d: small, stroke: "#555" });
add(rx, "path", { d: big, stroke: "#444" });

small = ""; big = "";
for (let i = -29; i <= 61; i++) {
  const y = Math.round(OY + 2 + i * SY / 10) + 0.5;
  if (i % 10) small += `M7 ${y}h2`;
  else {
    big += `M0 ${y}h9`;
    add(ry, "text", { transform: `translate(8 ${y - 1}) rotate(-90)` }, (i * 10).toFixed(1));
  }
}
add(ry, "path", { d: small, stroke: "#555" });
add(ry, "path", { d: big, stroke: "#444" });

const grid = document.getElementById("grid");
let d = "";
for (let i = 1; i < 18; i++) d += `M${Math.round(OX + i * SX / 2) + 0.5} ${OY}v284`;
for (let i = 1; i < 12; i++) d += `M${OX} ${Math.round(OY + i * SY / 2) + 0.5}h320`;
add(grid, "path", { d });

const comb = document.getElementById("comb");
d = "";
for (let x = 381.5; x < 410; x += 3) d += `M${x} 204v46`;
add(comb, "path", { d });
d = "";
for (let x = 383, k = 0; x < 409; x += 3, k = 1 - k) d += `M${x} ${216 - k}v9M${x} ${229 - k}v${9 + k}`;
add(comb, "path", { d, "stroke-width": 2, stroke: "#999" });

const colors = ["#000", "#00f", "#f00", "#0f0", "#fa8072", "#ff0", "#1e90ff", "#8b3a12", "#808000", "#00805a",
  "#ff4500", "#400080", "#ffd0dc", "#b09cf8", "#d8fb9a", "#fa8f58", "#db7093", "#8870d8", "#78dc78", "#b4a070"];
const box = document.getElementById("swatches");
for (const c of colors) {
  const b = document.createElement("button");
  b.style.background = c;
  b.setAttribute("aria-label", "Color " + c);
  box.appendChild(b);
}
```
